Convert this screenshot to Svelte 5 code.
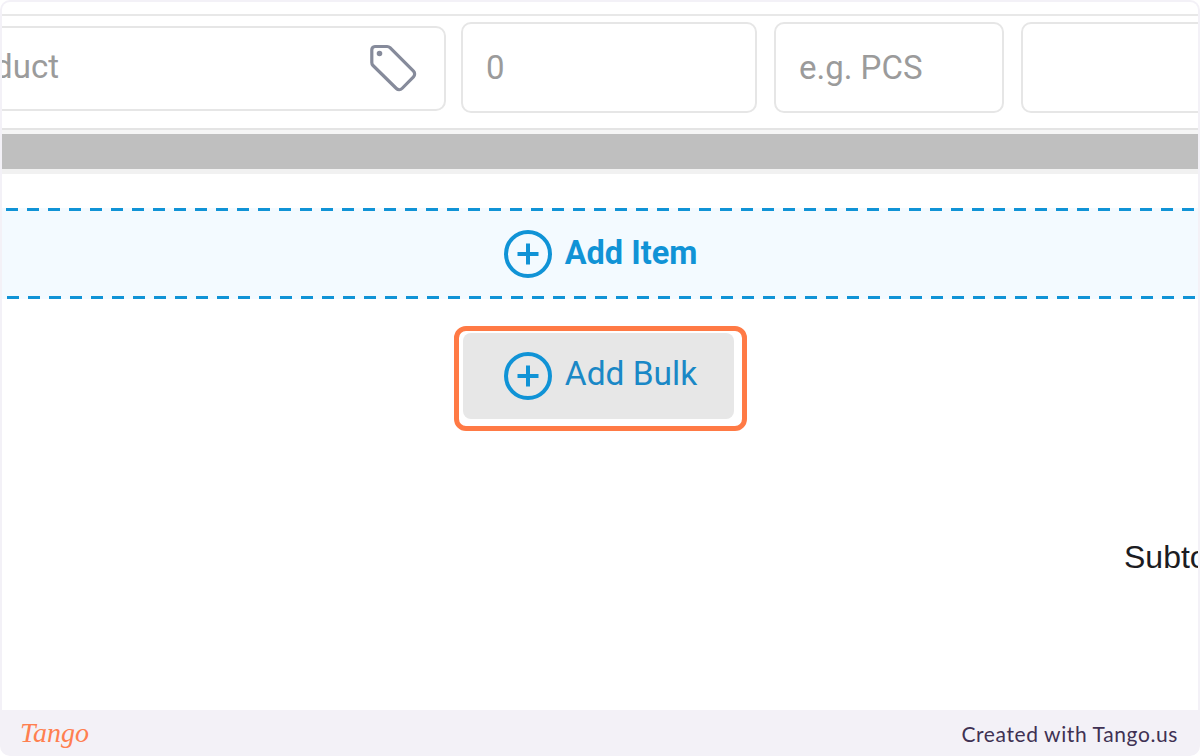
<script>
  const fields = [
    { label: '0', cls: 'qty' },
    { label: 'e.g. PCS', cls: 'unit' },
    { label: '', cls: 'price' }
  ];
</script>

{#snippet plus()}
  <svg class="plus" viewBox="0 0 48 48" aria-hidden="true">
    <circle cx="24" cy="24" r="22" />
    <path d="M24 13.5v21M13.5 24h21" />
  </svg>
{/snippet}

<div class="frame">
  <main class="shot">
    <div class="table-top"></div>
    <div class="row">
      <div class="field product">
        <span class="placeholder">Product</span>
        <svg class="tag" viewBox="0 0 48 48" aria-hidden="true">
          <path d="M5 2.5h12a4 4 0 0 1 3 1.2l23.5 23.5a4 4 0 0 1 0 5.6L32 44.5a4 4 0 0 1-5.6 0L3 21.5a4 4 0 0 1-1.2-3V6a3.5 3.5 0 0 1 3.2-3.5z" />
          <circle cx="9.5" cy="9.5" r="1.2" />
        </svg>
      </div>
      {#each fields as field}
        <div class="field {field.cls}"><span class="placeholder">{field.label}</span></div>
      {/each}
    </div>
    <div class="scroll"><div class="scroll-thumb"></div></div>

    <div class="add-item">
      {@render plus()}
      <span>Add Item</span>
    </div>

    <div class="bulk-wrap">
      <div class="highlight">
        <button class="add-bulk">
          {@render plus()}
          <span>Add Bulk</span>
        </button>
      </div>
    </div>

    <div class="subtotal">Subtotal</div>
  </main>

  <footer>
    <span class="logo">Tango</span>
    <span class="credit">Created with Tango.us</span>
  </footer>
</div>

<style>
  :global(body) {
    background: #fff;
  }

  .frame {
    height: 756px;
    box-sizing: border-box;
    padding-top: 2px;
    background: #f3f1f7;
    border-radius: 10px;
    overflow: hidden;
    display: flex;
    flex-direction: column;
    font-family: Roboto, sans-serif;
  }

  .shot {
    height: 708px;
    margin: 0 2px;
    background: #fff;
    border-radius: 8px 8px 0 0;
    overflow: hidden;
    flex-shrink: 0;
  }

  .table-top {
    height: 12px;
    border-bottom: 2px solid #e8e8e8;
  }

  .row {
    height: 112px;
    box-sizing: border-box;
    padding-top: 6px;
    display: flex;
    align-items: flex-start;
    gap: 16px;
  }

  .field {
    box-sizing: border-box;
    flex-shrink: 0;
    height: 91px;
    border: 2px solid #e6e6e6;
    border-radius: 10px;
    display: flex;
    align-items: center;
    justify-content: space-between;
    padding: 0 23px;
  }

  .product {
    width: 501px;
    height: 85px;
    margin: 4px 0 0 -57px;
    padding: 0 26px 0 0;
    justify-content: flex-end;
    position: relative;
  }

  .product .placeholder {
    position: absolute;
    right: 385px;
    top: 19px;
  }

  .qty {
    width: 296px;
    margin-left: -1px;
  }

  .unit {
    width: 230px;
    margin-left: 1px;
  }

  .price {
    width: 240px;
    margin-left: 1px;
  }

  .placeholder {
    font-size: 33px;
    color: #9b9b9b;
    white-space: nowrap;
  }

  .tag {
    width: 48px;
    height: 48px;
    margin-top: -2px;
    fill: none;
    stroke: #868b9b;
    stroke-width: 3.2;
  }

  .tag circle {
    fill: #868b9b;
  }

  .scroll {
    border-top: 2px solid #e4e4e4;
    border-bottom: 5px solid #f1f1f1;
    padding-top: 4px;
    background: #f5f5f5;
  }

  .scroll-thumb {
    height: 35px;
    background: #bfbfbf;
  }

  .add-item {
    margin-top: 34px;
    height: 91px;
    padding-left: 1px;
    display: flex;
    align-items: center;
    justify-content: center;
    gap: 13px;
    color: #1093d6;
    font-size: 32.5px;
    font-weight: 700;
    background-color: #f3faff;
    background-image:
      linear-gradient(90deg, #1093d6 12px, transparent 12px),
      linear-gradient(90deg, #1093d6 12px, transparent 12px);
    background-size: 21px 3px, 21px 3px;
    background-repeat: repeat-x;
    background-position: 4px 0, 5px 100%;
  }

  .add-item span {
    margin-top: -2px;
  }

  .bulk-wrap {
    margin-top: 27px;
    display: flex;
    justify-content: center;
  }

  .highlight {
    box-sizing: border-box;
    width: 293px;
    height: 105px;
    border: 5px solid #ff7a45;
    border-radius: 12px;
    padding: 2px 8px 7px 4px;
  }

  .add-bulk {
    width: 100%;
    height: 100%;
    border: 0;
    border-radius: 8px;
    background: #e7e7e7;
    display: flex;
    align-items: center;
    justify-content: center;
    gap: 13px;
    padding: 0 0 0 5px;
    color: #1a88c6;
    font-family: inherit;
    font-size: 33.5px;
    font-weight: 400;
  }

  .add-bulk span {
    margin-top: -5px;
  }

  .plus {
    width: 48px;
    height: 48px;
    flex-shrink: 0;
    fill: none;
    stroke: #1093d6;
    stroke-width: 4;
  }

  .subtotal {
    margin: 106px 0 0 1122px;
    font-family: "Liberation Sans", Arial, sans-serif;
    font-size: 32px;
    line-height: 40px;
    color: #1c1c22;
    white-space: nowrap;
  }

  footer {
    height: 46px;
    flex-shrink: 0;
    display: flex;
    align-items: center;
    justify-content: space-between;
    padding: 0 22px 0 20px;
  }

  .logo {
    font-family: "Liberation Serif", serif;
    font-style: italic;
    font-size: 28px;
    color: #ff7f50;
  }

  .credit {
    font-family: Lato, sans-serif;
    font-size: 21px;
    letter-spacing: 0.6px;
    color: #3f3153;
  }
</style>
